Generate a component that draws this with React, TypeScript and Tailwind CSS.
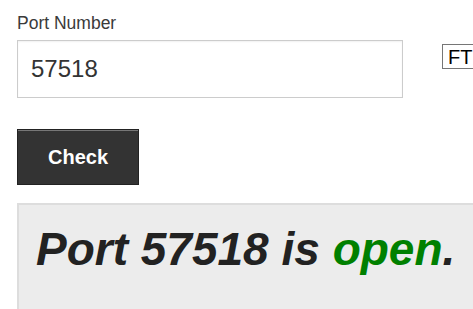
import React from 'react';

export default function App() {
  return (
    <div className="min-h-[309px] overflow-hidden bg-white pl-[17px] pt-[13px] font-['Liberation_Sans',Arial,sans-serif]">
      <label className="block text-[17.5px] leading-[20px] text-[#3a3a3a]">Port Number</label>

      <div className="mt-[7px] flex items-start">
        <div className="flex h-[58px] w-[386px] shrink-0 items-center border border-[#cccccc] bg-white pl-[13px] shadow-[inset_0_1px_2px_rgba(0,0,0,0.06)]">
          <span className="text-[24px] leading-none text-[#333333]">57518</span>
        </div>
        <div className="ml-[39px] mt-[4px] flex h-[25px] w-[60px] shrink-0 items-center border border-[#767676] bg-white pl-[5px]">
          <span className="text-[20px] leading-none text-black">FT</span>
        </div>
      </div>

      <button className="mt-[31px] flex h-[56px] w-[122px] items-center justify-center border border-[#222222] bg-[#333333] shadow-[inset_0_1px_0_#777777]">
        <span className="text-[20px] font-bold text-white">Check</span>
      </button>

      <div className="mt-[18px] w-[500px] border-2 border-[#dddddd] bg-[#ececec] pl-[17px] pt-[17px] pb-[40px]">
        <p className="whitespace-nowrap text-[46px] font-bold italic leading-[55px] text-[#222222]">
          Port 57518 is <span className="text-[#008000]">open</span>.
        </p>
      </div>
    </div>
  );
}
